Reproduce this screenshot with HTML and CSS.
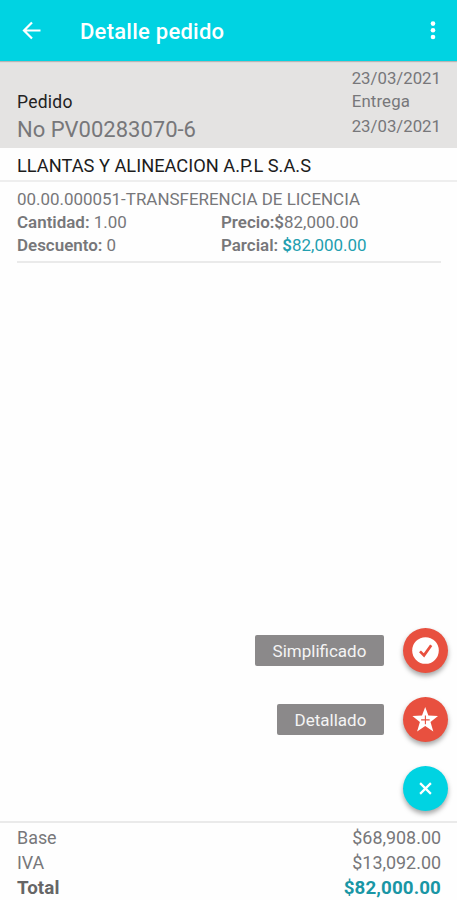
FILE: index.html
```html
<!DOCTYPE html>
<html lang="es">
  <head>
    <meta charset="utf-8">
    <title>Detalle pedido</title>
    <link rel="stylesheet" href="styles.css">
  </head>
  <body>
    <header class="toolbar">
      <svg class="back" viewBox="0 0 20 20"><path d="M18.5 9.5H2.5M10 1.5L2 9.5l8 8" /></svg>
      <h1>Detalle pedido</h1>
      <svg class="more" viewBox="0 0 6 20"><circle cx="3" cy="2.6" r="2.3" /><circle cx="3" cy="9.3" r="2.3" /><circle cx="3" cy="16" r="2.3" /></svg>
    </header>

    <section class="order">
      <div class="order-id">
        <div class="order-label">Pedido</div>
        <div class="order-number">No PV00283070-6</div>
      </div>
      <div class="order-dates">
        <div>23/03/2021</div>
        <div class="delivery">Entrega</div>
        <div>23/03/2021</div>
      </div>
    </section>

    <h2 class="customer">LLANTAS Y ALINEACION A.P.L S.A.S</h2>

    <main>
      <div class="item">
        <div class="item-name">00.00.000051-TRANSFERENCIA DE LICENCIA</div>
        <div><b>Cantidad:</b> 1.00</div>
        <div><b>Precio:$</b>82,000.00</div>
        <div><b>Descuento:</b> 0</div>
        <div><b>Parcial:</b> <span class="partial"><b>$</b>82,000.00</span></div>
      </div>
    </main>

    <div class="actions">
      <div class="action">
        <span class="tip simple">Simplificado</span>
        <button class="fab">
          <svg viewBox="0 0 27 27"><circle cx="13.5" cy="13.5" r="13.3" fill="#fff" /><path d="M8 14.4l4 4 7.2-10.2" fill="none" stroke="#e8503f" stroke-width="2.7" /></svg>
        </button>
      </div>
      <div class="action">
        <span class="tip">Detallado</span>
        <button class="fab">
          <svg viewBox="0 0 27 27"><path d="M13.2.9l3.2 8.7 9.6.3-7.5 6 2.8 9.5-8.1-5.4-8.1 5.4 2.8-9.5-7.5-6 9.6-.3z" fill="#fff" /><path d="M13.4 9.6v8.6M9.1 13.9h8.6" stroke="#e8503f" stroke-width="1.1" /></svg>
        </button>
      </div>
      <div class="action">
        <button class="fab close">
          <svg viewBox="0 0 27 27"><path d="M8.1 8.1l10.8 10.8M18.9 8.1L8.1 18.9" stroke="#fff" stroke-width="2.2" /></svg>
        </button>
      </div>
    </div>

    <footer class="totals">
      <div><span>Base</span><span>$68,908.00</span></div>
      <div><span>IVA</span><span>$13,092.00</span></div>
      <div class="total"><span>Total</span><span class="amount">$82,000.00</span></div>
    </footer>
  </body>
</html>
```
FILE: styles.css
```css
* {
    box-sizing: border-box;
}
body {
    background: #fefefe;
    color: #77777a;
    display: flex;
    flex-direction: column;
    font-family: Roboto, sans-serif;
    font-size: 17px;
    height: 900px;
    margin: 0;
    position: relative;
}
h1, h2 {
    margin: 0;
}
.toolbar {
    align-items: center;
    background: #00d3e2;
    box-shadow: 0 1px 1px rgba(0, 0, 0, .2);
    display: flex;
    height: 61px;
    padding: 0 21px 0 22px;
    position: relative;
}
.toolbar h1 {
    color: #fff;
    flex: 1;
    font-size: 22px;
    font-weight: 500;
    letter-spacing: .25px;
    margin-left: 38px;
    padding-top: 2px;
}
.back {
    fill: none;
    height: 20px;
    stroke: #fff;
    stroke-width: 2.2;
    width: 20px;
}
.more {
    fill: #fff;
    height: 20px;
    width: 6px;
}
.order {
    background: #e4e3e2;
    display: flex;
    height: 87px;
    justify-content: space-between;
    padding: 5px 16px 0 17px;
}
.order-label {
    color: #222;
    font-size: 17.5px;
    letter-spacing: .25px;
    line-height: 26px;
    padding-top: 23px;
}
.order-number {
    font-size: 22px;
    line-height: 29px;
}
.order-dates {
    font-size: 16.8px;
    line-height: 24px;
}
.delivery {
    letter-spacing: .15px;
    line-height: 23px;
    padding-bottom: 1px;
}
.customer {
    border-bottom: 2px solid #eee;
    color: #1c1c1c;
    font-size: 18.25px;
    font-weight: 400;
    height: 34px;
    line-height: 35px;
    padding: 0 17px;
}
main {
    flex: 1;
    padding: 6px 16px 6px 17px;
}
.item {
    align-content: start;
    border-bottom: 2px solid #eaeaea;
    display: grid;
    font-size: 16.95px;
    grid-template-columns: 204px 1fr;
    height: 75px;
    line-height: 23px;
}
.item b {
    font-weight: 600;
}
.item-name {
    grid-column: 1 / 3;
}
.partial {
    color: #239fb0;
}
.actions {
    display: flex;
    flex-direction: column;
    gap: 24px;
    position: absolute;
    right: 9px;
    top: 628px;
}
.action {
    align-items: center;
    display: flex;
    gap: 19px;
    justify-content: flex-end;
}
.tip {
    background: #8b898a;
    border-radius: 2px;
    color: #f4f4f4;
    height: 31px;
    line-height: 33px;
    text-align: center;
    width: 107px;
}
.tip.simple {
    width: 129px;
}
.fab {
    align-items: center;
    background: #e8503f;
    border: 0;
    border-radius: 50%;
    box-shadow: 0 3px 5px rgba(0, 0, 0, .35);
    display: flex;
    height: 45px;
    justify-content: center;
    padding: 0;
    width: 45px;
}
.fab svg {
    height: 27px;
    width: 27px;
}
.fab.close {
    background: #00d3e2;
}
.totals {
    border-top: 2px solid #eaeaea;
    font-size: 17.9px;
    height: 79px;
    line-height: 25px;
    padding: 2px 16px 0 17px;
}
.totals div {
    display: flex;
    justify-content: space-between;
}
.totals .total {
    color: #666;
    font-size: 18.8px;
    font-weight: 700;
    letter-spacing: .1px;
    line-height: 26px;
}
.amount {
    color: #1996a5;
}
```
